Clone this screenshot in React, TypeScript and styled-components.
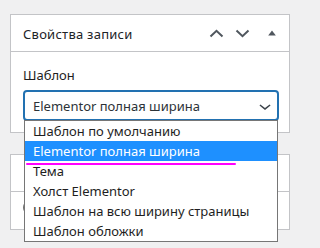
import React from "react";
import styled, { createGlobalStyle } from "styled-components";

const Global = createGlobalStyle`
  html, body { margin: 0; padding: 0; background: #f0f0f1; }
  body { font-family: "Noto Sans", "Open Sans", sans-serif; font-size: 13px; }
  * { box-sizing: border-box; }
`;

const Page = styled.div`
  position: relative;
  width: 302px;
  height: 248px;
  padding: 14px 12px 0 10px;
  display: flex;
  flex-direction: column;
  gap: 21px;
  overflow: hidden;
`;

const Panel = styled.section`
  background: #fff;
  border: 1px solid #c3c4c7;
  width: 280px;
`;

const Header = styled.div`
  height: 37px;
  border-bottom: 1px solid #c3c4c7;
  display: flex;
  align-items: center;
  padding: 0 0 0 12px;
`;

const Title = styled.h2`
  margin: 2px 0 0;
  flex: 1;
  font-size: 13px;
  font-weight: 400;
  letter-spacing: 0.25px;
  color: #1d2327;
  line-height: 1;
`;

const IconBtn = styled.span<{ $w: number }>`
  width: ${(p) => p.$w}px;
  height: 24px;
  display: flex;
  align-items: center;
  justify-content: center;
`;

const Body = styled.div`
  padding: 15px 10px 0 12px;
  height: 80px;
`;

const Label = styled.div`
  font-size: 13px;
  color: #1e1e1e;
  line-height: 16px;
  margin-bottom: 7px;
`;

const Select = styled.div`
  height: 31px;
  border: 2px solid #2271b1;
  border-radius: 4px;
  display: flex;
  align-items: center;
  padding: 0 0 0 8px;
  font-size: 13px;
  color: #2c3338;
`;

const SelectText = styled.span`
  flex: 1;
`;

const Section = styled.div<{ $last?: boolean }>`
  height: 37px;
  border-bottom: ${(p) => (p.$last ? "none" : "1px solid #c3c4c7")};
  padding: 9px 12px;
`;

const Toggle = styled.div`
  width: 36px;
  height: 13px;
  border: 1.5px solid #757575;
  border-radius: 6px;
`;

const List = styled.ul`
  position: absolute;
  left: 24px;
  top: 120px;
  width: 254px;
  margin: 0;
  padding: 0;
  list-style: none;
  background: #fff;
  border: 1px solid #767676;
`;

const Item = styled.li<{ $active?: boolean }>`
  height: 20px;
  line-height: 20px;
  padding: 0 0 0 8px;
  font-size: 13px;
  white-space: nowrap;
  color: ${(p) => (p.$active ? "#fff" : "#1e1e1e")};
  background: ${(p) => (p.$active ? "#1e90ff" : "transparent")};
`;

const Mark = styled.div`
  position: absolute;
  left: 1px;
  top: 42px;
  width: 210px;
  height: 2px;
  border-radius: 1px;
  background: #f0f;
`;

const Chevron = ({ up }: { up?: boolean }) => (
  <svg width="15" height="9" viewBox="0 0 15 9">
    <polyline
      points={up ? "1.5,7.5 7.5,1.8 13.5,7.5" : "1.5,1.5 7.5,7.2 13.5,1.5"}
      fill="none"
      stroke="#50575e"
      strokeWidth="2"
    />
  </svg>
);

const items = [
  "Шаблон по умолчанию",
  "Elementor полная ширина",
  "Тема",
  "Холст Elementor",
  "Шаблон на всю ширину страницы",
  "Шаблон обложки",
];

export default function App() {
  return (
    <>
      <Global />
      <Page>
        <Panel>
          <Header>
            <Title>Свойства записи</Title>
            <IconBtn $w={26}>
              <Chevron up />
            </IconBtn>
            <IconBtn $w={26}>
              <Chevron />
            </IconBtn>
            <IconBtn $w={34}>
              <svg width="8" height="6" viewBox="0 0 8 6">
                <polygon points="4,0.5 7.8,5.5 0.2,5.5" fill="#50575e" />
              </svg>
            </IconBtn>
          </Header>
          <Body>
            <Label>Шаблон</Label>
            <Select>
              <SelectText>Elementor полная ширина</SelectText>
              <svg width="24" height="24" viewBox="0 0 24 24">
                <path
                  d="M17.5 11.6L12 16l-5.5-4.4.9-1.2L12 14l4.6-3.6 1 1.2z"
                  fill="#3c434a"
                />
              </svg>
            </Select>
          </Body>
        </Panel>
        <Panel>
          <Section />
          <Section $last>
            <Toggle />
          </Section>
        </Panel>
        <List>
          {items.map((t, i) => (
            <Item key={t} $active={i === 1}>
              {t}
            </Item>
          ))}
          <Mark />
        </List>
      </Page>
    </>
  );
}
